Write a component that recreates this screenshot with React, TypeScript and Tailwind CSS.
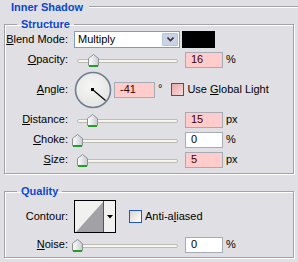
import type { ReactNode } from "react";

const font = { fontFamily: '"Liberation Sans", Arial, sans-serif' };

function Thumb() {
  return (
    <svg width="11" height="13" viewBox="0 0 11 13" aria-hidden>
      <defs>
        <linearGradient id="thumbFill" x1="0" y1="0" x2="1" y2="0">
          <stop offset="0" stopColor="#ffffff" />
          <stop offset="1" stopColor="#c9cbd0" />
        </linearGradient>
      </defs>
      <path d="M5.5 0.5 L10.5 4.5 L10.5 11.5 L0.5 11.5 L0.5 4.5 Z" fill="url(#thumbFill)" stroke="#8b9097" />
      <path d="M1 12 L10 12" stroke="#21a121" strokeWidth="2" />
    </svg>
  );
}

function Slider({ at }: { at: number }) {
  return (
    <div className="relative h-[17px] w-[108px] shrink-0">
      <div className="absolute left-[3px] top-[8px] h-[4px] w-[101px] rounded-full border border-[#bdbcb4] bg-[#f6f5ee]" />
      <div className="absolute top-[3px]" style={{ left: at - 5 }}>
        <Thumb />
      </div>
    </div>
  );
}

function Field({ value, pink, w = "w-[38px]" }: { value: string; pink?: boolean; w?: string }) {
  return (
    <div
      className={`${w} flex h-[16px] shrink-0 items-center border border-[#a5acb5] pl-[5px] text-[11px] ${
        pink ? "bg-[#ffcccc] text-[#3c0000]" : "bg-white text-black"
      }`}
    >
      {value}
    </div>
  );
}

function Label({ children }: { children: ReactNode }) {
  return <div className="w-[64px] shrink-0 pr-[1px] text-right text-[11px] text-black">{children}</div>;
}

function U({ children }: { children: ReactNode }) {
  return <span className="underline underline-offset-[1px]">{children}</span>;
}

function SliderRow({ label, value, unit, pink, at }: { label: ReactNode; value: string; unit: string; pink?: boolean; at: number }) {
  return (
    <div className="flex h-[17px] items-center">
      <Label>{label}</Label>
      <div className="ml-[5px] flex items-center">
        <Slider at={at} />
        <div className="ml-[3px]">
          <Field value={value} pink={pink} />
        </div>
        <span className="ml-[3px] text-[11px]">{unit}</span>
      </div>
    </div>
  );
}

function Group({ title, children, className }: { title: string; children: ReactNode; className?: string }) {
  return (
    <fieldset
      className={`mx-[4px] border border-[#a3a2a8] px-0 shadow-[inset_1px_1px_0_#ffffff,1px_1px_0_#ffffff] ${className ?? ""}`}
    >
      <legend className="ml-[12px] px-[4px] text-[11px] font-bold leading-[13px] text-[#0b46d1]">{title}</legend>
      {children}
    </fieldset>
  );
}

function Dial() {
  return (
    <svg width="38" height="38" viewBox="0 0 38 38" aria-hidden>
      <defs>
        <radialGradient id="dialFill" cx="0.45" cy="0.4" r="0.6">
          <stop offset="0" stopColor="#f7f7f6" />
          <stop offset="1" stopColor="#e4e4e2" />
        </radialGradient>
      </defs>
      <circle cx="19" cy="19" r="17.5" fill="url(#dialFill)" stroke="#6f7f92" strokeWidth="1.6" />
      <line x1="18.5" y1="18.5" x2="31.5" y2="29.5" stroke="#000" strokeWidth="1.2" />
      <rect x="17" y="17" width="3" height="3" fill="#000" />
    </svg>
  );
}

function Checkbox({ pink }: { pink?: boolean }) {
  return (
    <div
      className={`h-[13px] w-[13px] shrink-0 border border-[#2553c8] ${
        pink ? "bg-gradient-to-br from-[#e3a9a9] to-[#ffd9d9]" : "bg-gradient-to-br from-[#d6d6d0] to-[#ffffff]"
      }`}
    />
  );
}

export default function App() {
  return (
    <div className="h-[262px] w-[298px] overflow-hidden bg-[#e0dfe3] text-black" style={font}>
      <div className="flex h-[14px] items-center">
        <span className="ml-[11px] text-[11px] font-bold text-[#0b46d1]">Inner Shadow</span>
        <div className="ml-[6px] h-[2px] flex-1 border-t border-[#a3a2a8] bg-white" />
      </div>

      <Group title="Structure" className="mt-[4px] h-[156px]">
        <div className="flex flex-col">
          <div className="flex h-[17px] items-center">
            <Label>
              <U>B</U>lend Mode:
            </Label>
            <div className="ml-[5px] flex h-[17px] w-[106px] items-center justify-between border border-[#7f9db9] bg-white pl-[3px]">
              <span className="text-[11px]">Multiply</span>
              <div className="mr-[1px] flex h-[13px] w-[16px] items-center justify-center rounded-[1px] border border-[#b6c4d8] bg-[#c9d3e6]">
                <svg width="7" height="5" viewBox="0 0 7 5" aria-hidden>
                  <path d="M0.5 0.5 L3.5 3.5 L6.5 0.5" fill="none" stroke="#4d2440" strokeWidth="1.6" />
                </svg>
              </div>
            </div>
            <div className="ml-[2px] h-[17px] w-[33px] bg-black" />
          </div>

          <div className="mt-[3px]">
            <SliderRow label={<><U>O</U>pacity:</>} value="16" unit="%" pink at={19} />
          </div>

          <div className="mt-[3px] flex h-[37px] items-center">
            <Label>
              <U>A</U>ngle:
            </Label>
            <div className="ml-[5px]">
              <Dial />
            </div>
            <div className="ml-[2px]">
              <Field value="-41" pink w="w-[41px]" />
            </div>
            <span className="ml-[3px] self-start pt-[9px] text-[11px]">°</span>
            <div className="ml-[9px]">
              <Checkbox pink />
            </div>
            <span className="ml-[3px] text-[11px]">
              Use <U>G</U>lobal Light
            </span>
          </div>

          <div className="mt-[3px]">
            <SliderRow label={<><U>D</U>istance:</>} value="15" unit="px" pink at={18} />
          </div>
          <div className="mt-[3px]">
            <SliderRow label={<><U>C</U>hoke:</>} value="0" unit="%" at={3} />
          </div>
          <div className="mt-[3px]">
            <SliderRow label={<><U>S</U>ize:</>} value="5" unit="px" pink at={8} />
          </div>
        </div>
      </Group>

      <Group title="Quality" className="mt-[11px] h-[73px]">
        <div className="flex flex-col pt-[2px]">
          <div className="flex h-[33px] items-center">
            <Label>Contour:</Label>
            <div className="ml-[5px] flex h-[33px] w-[42px] border border-black bg-[#f1f1ef]">
              <div className="h-full w-[29px] border-r border-[#555]">
                <svg width="28" height="31" viewBox="0 0 28 31" aria-hidden>
                  <path d="M1 31 L28 1 L28 31 Z" fill="#a2a1a6" />
                </svg>
              </div>
              <div className="flex flex-1 items-center justify-center">
                <svg width="6" height="4" viewBox="0 0 6 4" aria-hidden>
                  <path d="M0 0 L6 0 L3 3.5 Z" fill="#000" />
                </svg>
              </div>
            </div>
            <div className="ml-[13px]">
              <Checkbox />
            </div>
            <span className="ml-[3px] text-[11px]">
              Anti-a<U>l</U>iased
            </span>
          </div>
          <div className="mt-[3px]">
            <SliderRow label={<><U>N</U>oise:</>} value="0" unit="%" at={3} />
          </div>
        </div>
      </Group>
    </div>
  );
}
